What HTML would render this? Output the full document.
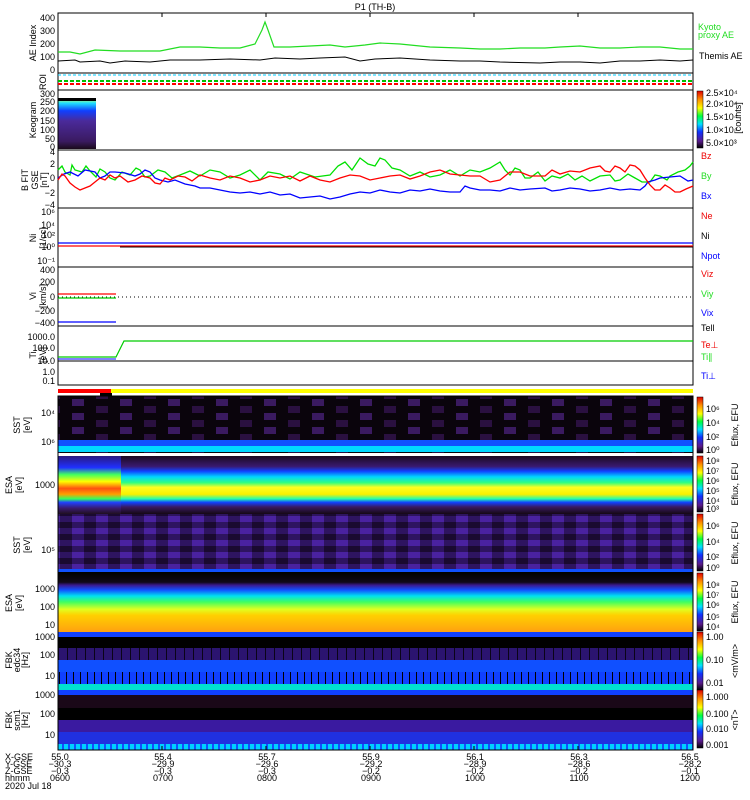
<!DOCTYPE html>
<html><head><meta charset="utf-8"><style>
html,body{margin:0;padding:0;background:#fff}
svg{display:block}
text{font-family:"Liberation Sans",sans-serif;font-size:9px}
</style></head><body>
<svg width="750" height="800" viewBox="0 0 750 800" xmlns="http://www.w3.org/2000/svg">
<defs>
<linearGradient id="cb" x1="0" y1="1" x2="0" y2="0">
<stop offset="0" stop-color="#000"/><stop offset=".12" stop-color="#5a1a8a"/><stop offset=".28" stop-color="#1030ff"/><stop offset=".42" stop-color="#00e0ff"/><stop offset=".56" stop-color="#00ff40"/><stop offset=".7" stop-color="#ffff00"/><stop offset=".85" stop-color="#ff9000"/><stop offset="1" stop-color="#e00000"/>
</linearGradient>
<linearGradient id="esai" x1="0" y1="0" x2="0" y2="1">
<stop offset="0" stop-color="#1a0a20"/><stop offset=".18" stop-color="#3a1a70"/><stop offset=".26" stop-color="#1040ff"/><stop offset=".36" stop-color="#00d8ff"/><stop offset=".46" stop-color="#30ff80"/><stop offset=".54" stop-color="#ffff20"/><stop offset=".66" stop-color="#f8f000"/><stop offset=".74" stop-color="#20ffb0"/><stop offset=".8" stop-color="#1040ff"/><stop offset=".88" stop-color="#3a1a60"/><stop offset="1" stop-color="#150815"/>
</linearGradient>
<linearGradient id="esai0" x1="0" y1="0" x2="0" y2="1">
<stop offset="0" stop-color="#2a1a80"/><stop offset=".2" stop-color="#2030ff"/><stop offset=".32" stop-color="#40ff60"/><stop offset=".44" stop-color="#ffff00"/><stop offset=".56" stop-color="#ff5010"/><stop offset=".66" stop-color="#ffa000"/><stop offset=".74" stop-color="#30ff60"/><stop offset=".8" stop-color="#2040ff"/><stop offset=".9" stop-color="#3a1a70"/><stop offset="1" stop-color="#201020"/>
</linearGradient>
<linearGradient id="esae" x1="0" y1="0" x2="0" y2="1">
<stop offset="0" stop-color="#000"/><stop offset=".17" stop-color="#100818"/><stop offset=".22" stop-color="#3a1a90"/><stop offset=".3" stop-color="#1050ff"/><stop offset=".4" stop-color="#00e0f0"/><stop offset=".5" stop-color="#40ff60"/><stop offset=".62" stop-color="#e0ff20"/><stop offset=".72" stop-color="#ffd000"/><stop offset="1" stop-color="#ffa010"/>
</linearGradient>
<linearGradient id="keo" x1="0" y1="0" x2="0" y2="1">
<stop offset="0" stop-color="#f0ff40"/><stop offset=".1" stop-color="#20e0ff"/><stop offset=".25" stop-color="#1040ff"/><stop offset=".45" stop-color="#4a2a9a"/><stop offset=".85" stop-color="#3a1a60"/><stop offset="1" stop-color="#1a0a1a"/>
</linearGradient>
<pattern id="stripe" width="7" height="10" patternUnits="userSpaceOnUse"><rect width="7" height="10" fill="#1040ff"/><rect x="3" width="1" height="10" fill="#000"/></pattern>
<pattern id="stripe2" width="9" height="10" patternUnits="userSpaceOnUse"><rect width="9" height="10" fill="#2b1470"/><rect x="4" width="1" height="10" fill="#0a0418"/></pattern>
<pattern id="cy" width="6" height="10" patternUnits="userSpaceOnUse"><rect width="6" height="10" fill="#00d0ff"/><rect x="2" width="2" height="10" fill="#1050ff"/></pattern>
<pattern id="sst" width="48" height="14" patternUnits="userSpaceOnUse"><rect width="48" height="14" fill="#0a040c"/><rect x="0" width="12" height="7" fill="#2a1040"/><rect x="24" y="7" width="12" height="7" fill="#3a1a60"/></pattern>
<pattern id="sst2" width="24" height="12" patternUnits="userSpaceOnUse"><rect width="24" height="12" fill="#2e1460"/><rect x="0" width="12" height="6" fill="#4a22a0"/><rect x="12" y="6" width="12" height="6" fill="#1a0a30"/></pattern>
</defs>

<text x="375" y="10" text-anchor="middle" font-size="10">P1 (TH-B)</text>

<!-- AE panel -->
<rect x="58" y="13" width="635" height="60" fill="none" stroke="#000"/>
<polyline fill="none" stroke="#2d2" stroke-width="1.2" points="58,52 70,52 80,54 95,50 120,51 150,51 160,51 180,47 200,47 220,48 240,48 255,44 262,30 265,22 268,30 274,47 290,47 310,46 330,45 345,47 365,45 380,43 400,44 430,47 460,48 480,49 500,49 520,48 545,48 560,47 580,46 600,48 620,48 640,47 660,47 680,49 693,49"/>
<polyline fill="none" stroke="#000" points="58,61 75,60 80,62 100,61 110,63 125,61 150,62 170,60 200,60 230,59 260,60 275,58 300,59 320,58 345,57 360,61 375,59 400,58 430,60 460,61 480,61 500,62 540,63 560,62 580,62 600,63 620,61 640,61 660,60 680,61 693,60"/>
<g font-size="9" text-anchor="end"><text x="55" y="21">400</text><text x="55" y="34">300</text><text x="55" y="47">200</text><text x="55" y="60">100</text><text x="55" y="73">0</text></g>
<text transform="translate(36,43) rotate(-90)" text-anchor="middle">AE Index</text>
<text x="698" y="30" fill="#2d2" font-size="8">Kyoto</text><text x="698" y="38" fill="#2d2" font-size="8">proxy AE</text>
<text x="699" y="59" font-size="9">Themis AE</text>

<!-- ROI -->
<rect x="58" y="73" width="635" height="17" fill="none" stroke="#000"/>
<line x1="58" y1="75" x2="693" y2="75" stroke="#0cf" stroke-dasharray="3,2"/>
<line x1="58" y1="81" x2="693" y2="81" stroke="#00c000" stroke-width="2" stroke-dasharray="4,2"/>
<line x1="58" y1="84" x2="693" y2="84" stroke="#f00" stroke-width="2" stroke-dasharray="4,2"/>
<text transform="translate(46,82) rotate(-90)" text-anchor="middle" font-size="8">ROI</text>

<!-- Keogram -->
<rect x="58" y="98" width="38" height="51" fill="url(#keo)"/>
<rect x="58" y="98" width="38" height="3" fill="#000"/>
<rect x="58" y="90" width="635" height="60" fill="none" stroke="#000"/>
<g font-size="9" text-anchor="end"><text x="55" y="97">300</text><text x="55" y="105">250</text><text x="55" y="114">200</text><text x="55" y="124">150</text><text x="55" y="133">100</text><text x="55" y="142">50</text><text x="55" y="150">0</text></g>
<text transform="translate(36,120) rotate(-90)" text-anchor="middle">Keogram</text>
<rect x="697" y="91" width="6" height="57" fill="url(#cb)" stroke="#000" stroke-width=".5"/>
<g font-size="8"><text x="706" y="96">2.5×10⁴</text><text x="706" y="107">2.0×10⁴</text><text x="706" y="120">1.5×10⁴</text><text x="706" y="133">1.0×10⁴</text><text x="706" y="146">5.0×10³</text></g>
<text transform="translate(741,118) rotate(-90)" text-anchor="middle" font-size="8">[counts]</text>

<!-- B field -->
<rect x="58" y="150" width="635" height="58" fill="none" stroke="#000"/>
<polyline fill="none" stroke="#00e000" stroke-width="1.3" points="58,170 62,166 65,172 70,175 72,165 75,170 82,172 86,166 90,171 96,177 100,169 105,172 110,178 115,180 122,172 130,175 136,168 140,170 145,177 150,176 158,170 165,172 172,178 180,175 190,171 200,176 210,170 220,172 230,178 240,175 250,170 260,180 268,172 280,174 290,179 300,172 315,177 330,175 338,166 345,162 352,170 360,158 368,164 375,166 380,158 385,160 392,168 400,170 410,176 420,172 430,177 440,175 450,170 460,176 470,170 480,172 490,168 500,162 505,170 510,175 515,168 520,170 525,178 530,178 538,172 545,181 552,176 560,178 568,174 575,180 582,176 590,181 600,176 610,175 615,181 620,180 628,174 635,178 642,182 650,182 655,175 660,176 667,180 670,176 678,172 685,170 690,166 693,162"/>
<polyline fill="none" stroke="#00f" stroke-width="1.3" points="58,178 64,174 70,172 78,176 85,170 95,172 100,178 105,176 110,172 115,172 125,173 135,176 140,174 145,170 150,172 155,178 160,180 168,182 175,180 185,184 195,186 200,188 210,188 220,190 230,192 240,193 250,192 260,194 270,192 280,195 290,194 300,198 310,197 320,196 330,199 340,197 350,194 360,192 370,193 380,190 390,192 400,193 410,190 420,191 430,189 440,191 450,192 460,192 465,186 470,188 480,190 490,190 500,191 510,188 520,190 530,189 545,188 552,191 560,190 570,188 580,189 590,191 600,190 610,188 620,190 630,189 640,190 645,186 648,182 655,180 660,178 670,177 680,176 688,181 693,180"/>
<polyline fill="none" stroke="#f00" stroke-width="1.3" points="58,180 62,174 65,176 70,183 75,187 80,190 85,188 90,186 95,182 100,178 105,180 110,175 115,178 120,176 128,182 135,180 142,176 150,178 155,183 160,184 165,178 170,180 178,176 185,177 192,181 200,175 210,178 220,180 230,176 240,178 250,182 260,180 270,176 280,178 290,176 300,181 310,176 320,180 330,182 340,178 350,175 360,176 370,180 380,178 390,176 400,175 410,179 420,176 430,172 440,170 450,174 460,175 470,176 480,176 490,182 500,180 510,172 520,172 530,176 545,176 552,170 560,174 570,171 580,172 590,168 600,166 605,171 610,172 615,166 620,168 625,172 630,165 635,166 640,170 645,178 650,185 655,190 660,190 665,185 670,188 675,192 680,192 686,189 693,186"/>
<g font-size="9" text-anchor="end"><text x="55" y="155">4</text><text x="55" y="167">2</text><text x="55" y="181">0</text><text x="55" y="196">−2</text><text x="55" y="208">−4</text></g>
<text transform="translate(28,180) rotate(-90)" text-anchor="middle" font-size="8">B FIT</text>
<text transform="translate(38,180) rotate(-90)" text-anchor="middle" font-size="8">GSE</text>
<text transform="translate(47,180) rotate(-90)" text-anchor="middle" font-size="8">[nT]</text>
<text x="701" y="159" fill="#e00" font-size="9">Bz</text><text x="701" y="179" fill="#2d2" font-size="9">By</text><text x="701" y="199" fill="#00f" font-size="9">Bx</text>

<!-- Ni -->
<rect x="58" y="208" width="635" height="59" fill="none" stroke="#000"/>
<line x1="58" y1="243" x2="693" y2="243" stroke="#00f" stroke-width="1.2"/>
<line x1="58" y1="246" x2="693" y2="246" stroke="#f00" stroke-width="1.2"/>
<line x1="120" y1="247" x2="693" y2="247" stroke="#000" stroke-width="1"/>
<g font-size="8" text-anchor="end"><text x="55" y="215">10⁶</text><text x="55" y="228">10⁴</text><text x="55" y="238">10²</text><text x="55" y="250">10⁰</text><text x="55" y="264">10⁻¹</text></g>
<text transform="translate(36,238) rotate(-90)" text-anchor="middle" font-size="8">Ni</text>
<text transform="translate(46,238) rotate(-90)" text-anchor="middle" font-size="8">[1/cc]</text>
<text x="701" y="219" fill="#e00" font-size="9">Ne</text><text x="701" y="239" font-size="9">Ni</text><text x="701" y="259" fill="#00f" font-size="9">Npot</text>

<!-- Vi -->
<rect x="58" y="267" width="635" height="59" fill="none" stroke="#000"/>
<line x1="58" y1="297" x2="693" y2="297" stroke="#000" stroke-dasharray="1,3"/>
<line x1="58" y1="294" x2="116" y2="294" stroke="#f00" stroke-width="1.3"/>
<line x1="58" y1="298" x2="116" y2="298" stroke="#0c0" stroke-width="1.3"/>
<line x1="58" y1="322" x2="116" y2="322" stroke="#00f" stroke-width="1.3"/>
<g font-size="9" text-anchor="end"><text x="55" y="273">400</text><text x="55" y="285">200</text><text x="55" y="300">0</text><text x="55" y="314">−200</text><text x="55" y="326">−400</text></g>
<text transform="translate(36,296) rotate(-90)" text-anchor="middle" font-size="8">Vi</text>
<text transform="translate(46,296) rotate(-90)" text-anchor="middle" font-size="8">[km/s]</text>
<text x="701" y="277" fill="#e00" font-size="8">Viz</text><text x="701" y="297" fill="#2d2" font-size="8">Viy</text><text x="701" y="316" fill="#00f" font-size="8">Vix</text>

<!-- Ti -->
<rect x="58" y="326" width="635" height="59" fill="none" stroke="#000"/>
<polyline fill="none" stroke="#0c0" stroke-width="1.2" points="58,357 116,357 124,341 693,341"/>
<line x1="58" y1="359" x2="116" y2="359" stroke="#00f"/>
<line x1="58" y1="361" x2="693" y2="361" stroke="#000"/>
<g font-size="8" text-anchor="end"><text x="55" y="340">1000.0</text><text x="55" y="351">100.0</text><text x="55" y="364">10.0</text><text x="55" y="375">1.0</text><text x="55" y="384">0.1</text></g>
<text transform="translate(36,355) rotate(-90)" text-anchor="middle" font-size="8">Ti</text>
<text transform="translate(46,355) rotate(-90)" text-anchor="middle" font-size="8">[eV]</text>
<text x="701" y="331" font-size="8">Tell</text><text x="701" y="348" fill="#e00" font-size="8">Te⊥</text><text x="701" y="360" fill="#2d2" font-size="8">Ti∥</text><text x="701" y="379" fill="#00f" font-size="8">Ti⊥</text>

<!-- mode bar -->
<rect x="58" y="389" width="53" height="4" fill="#f00"/>
<rect x="111" y="389" width="582" height="4" fill="#ff0"/>
<rect x="100" y="393" width="12" height="3" fill="#000"/>

<!-- SST ion -->
<rect x="58" y="396" width="635" height="57" fill="url(#sst)"/>
<rect x="58" y="440" width="635" height="6" fill="#1050ff"/>
<rect x="58" y="446" width="635" height="6" fill="#00d8ff"/>
<line x1="58" y1="455" x2="693" y2="455" stroke="#fff" stroke-width="2"/>
<!-- ESA ion -->
<rect x="58" y="456" width="635" height="58" fill="url(#esai)"/>
<rect x="58" y="456" width="63" height="58" fill="url(#esai0)"/>
<!-- SST elec -->
<rect x="58" y="514" width="635" height="59" fill="url(#sst2)"/>
<rect x="58" y="569" width="635" height="3" fill="#1050ff"/>
<!-- ESA elec -->
<rect x="58" y="572" width="635" height="60" fill="url(#esae)"/>
<!-- FBK1 -->
<rect x="58" y="632" width="635" height="5" fill="#1040ff"/>
<rect x="58" y="637" width="635" height="11" fill="#000"/>
<rect x="58" y="648" width="635" height="12" fill="url(#stripe2)"/>
<rect x="58" y="660" width="635" height="12" fill="#1050ff"/>
<rect x="58" y="672" width="635" height="12" fill="url(#stripe)"/>
<rect x="58" y="684" width="635" height="6" fill="#00e0d0"/>
<!-- FBK2 -->
<rect x="58" y="690" width="635" height="5" fill="#1040ff"/>
<rect x="58" y="695" width="635" height="13" fill="#1a0818"/>
<rect x="58" y="708" width="635" height="12" fill="#000"/>
<rect x="58" y="720" width="635" height="12" fill="#3a1aa0"/>
<rect x="58" y="732" width="635" height="12" fill="#2030e0"/>
<rect x="58" y="744" width="635" height="6" fill="url(#cy)"/>
<rect x="58" y="396" width="635" height="354" fill="none" stroke="#000"/>

<g font-size="8" text-anchor="end">
<text x="55" y="416">10⁴</text><text x="55" y="445">10⁶</text>
<text x="55" y="488">1000</text><text x="55" y="553">10⁵</text>
<text x="55" y="592">1000</text><text x="55" y="610">100</text><text x="55" y="628">10</text>
<text x="55" y="640">1000</text><text x="55" y="658">100</text><text x="55" y="679">10</text>
<text x="55" y="698">1000</text><text x="55" y="717">100</text><text x="55" y="738">10</text>
</g>
<g font-size="8" text-anchor="middle">
<text transform="translate(20,425) rotate(-90)">SST</text><text transform="translate(30,425) rotate(-90)">[eV]</text>
<text transform="translate(12,485) rotate(-90)">ESA</text><text transform="translate(22,485) rotate(-90)">[eV]</text>
<text transform="translate(20,545) rotate(-90)">SST</text><text transform="translate(30,545) rotate(-90)">[eV]</text>
<text transform="translate(12,603) rotate(-90)">ESA</text><text transform="translate(22,603) rotate(-90)">[eV]</text>
<text transform="translate(12,660) rotate(-90)">FBK</text><text transform="translate(20,660) rotate(-90)">edc34</text><text transform="translate(28,660) rotate(-90)">[Hz]</text>
<text transform="translate(12,720) rotate(-90)">FBK</text><text transform="translate(20,720) rotate(-90)">scm1</text><text transform="translate(28,720) rotate(-90)">[Hz]</text>
</g>

<!-- colorbars -->
<rect x="697" y="397" width="6" height="56" fill="url(#cb)" stroke="#000" stroke-width=".5"/>
<rect x="697" y="456" width="6" height="56" fill="url(#cb)" stroke="#000" stroke-width=".5"/>
<rect x="697" y="514" width="6" height="57" fill="url(#cb)" stroke="#000" stroke-width=".5"/>
<rect x="697" y="573" width="6" height="58" fill="url(#cb)" stroke="#000" stroke-width=".5"/>
<rect x="697" y="632" width="6" height="58" fill="url(#cb)" stroke="#000" stroke-width=".5"/>
<rect x="697" y="690" width="6" height="58" fill="url(#cb)" stroke="#000" stroke-width=".5"/>
<g font-size="8">
<text x="706" y="412">10⁶</text><text x="706" y="426">10⁴</text><text x="706" y="440">10²</text><text x="706" y="453">10⁰</text>
<text x="706" y="464">10⁸</text><text x="706" y="474">10⁷</text><text x="706" y="484">10⁶</text><text x="706" y="494">10⁵</text><text x="706" y="504">10⁴</text><text x="706" y="512">10³</text>
<text x="706" y="529">10⁶</text><text x="706" y="545">10⁴</text><text x="706" y="560">10²</text><text x="706" y="571">10⁰</text>
<text x="706" y="588">10⁸</text><text x="706" y="598">10⁷</text><text x="706" y="608">10⁶</text><text x="706" y="620">10⁵</text><text x="706" y="630">10⁴</text>
<text x="706" y="640">1.00</text><text x="706" y="663">0.10</text><text x="706" y="686">0.01</text>
<text x="706" y="700">1.000</text><text x="706" y="717">0.100</text><text x="706" y="732">0.010</text><text x="706" y="748">0.001</text>
</g>
<g font-size="8" text-anchor="middle">
<text transform="translate(738,425) rotate(-90)">Eflux, EFU</text>
<text transform="translate(738,484) rotate(-90)">Eflux, EFU</text>
<text transform="translate(738,543) rotate(-90)">Eflux, EFU</text>
<text transform="translate(738,602) rotate(-90)">Eflux, EFU</text>
<text transform="translate(738,661) rotate(-90)">&lt;mV/m&gt;</text>
<text transform="translate(738,720) rotate(-90)">&lt;nT&gt;</text>
</g>

<!-- time ticks -->
<g stroke="#000">
<line x1="162" y1="13" x2="162" y2="17"/><line x1="266" y1="13" x2="266" y2="17"/><line x1="370" y1="13" x2="370" y2="17"/><line x1="474" y1="13" x2="474" y2="17"/><line x1="578" y1="13" x2="578" y2="17"/>
<line x1="162" y1="746" x2="162" y2="750"/><line x1="266" y1="746" x2="266" y2="750"/><line x1="370" y1="746" x2="370" y2="750"/><line x1="474" y1="746" x2="474" y2="750"/><line x1="578" y1="746" x2="578" y2="750"/>
</g>

<!-- bottom labels -->
<g font-size="8">
<text x="5" y="760">X-GSE</text><text x="5" y="767">Y-GSE</text><text x="5" y="774">Z-GSE</text><text x="5" y="781">hhmm</text><text x="5" y="789">2020 Jul 18</text>
</g>
<g font-size="8" text-anchor="middle">
<text x="60" y="760">55.0</text><text x="60" y="767">−30.3</text><text x="60" y="774">−0.3</text><text x="60" y="781">0600</text>
<text x="163" y="760">55.4</text><text x="163" y="767">−29.9</text><text x="163" y="774">−0.3</text><text x="163" y="781">0700</text>
<text x="267" y="760">55.7</text><text x="267" y="767">−29.6</text><text x="267" y="774">−0.3</text><text x="267" y="781">0800</text>
<text x="371" y="760">55.9</text><text x="371" y="767">−29.2</text><text x="371" y="774">−0.2</text><text x="371" y="781">0900</text>
<text x="475" y="760">56.1</text><text x="475" y="767">−28.9</text><text x="475" y="774">−0.2</text><text x="475" y="781">1000</text>
<text x="579" y="760">56.3</text><text x="579" y="767">−28.6</text><text x="579" y="774">−0.2</text><text x="579" y="781">1100</text>
<text x="690" y="760">56.5</text><text x="690" y="767">−28.2</text><text x="690" y="774">−0.1</text><text x="690" y="781">1200</text>
</g>
</svg>
</body></html>
